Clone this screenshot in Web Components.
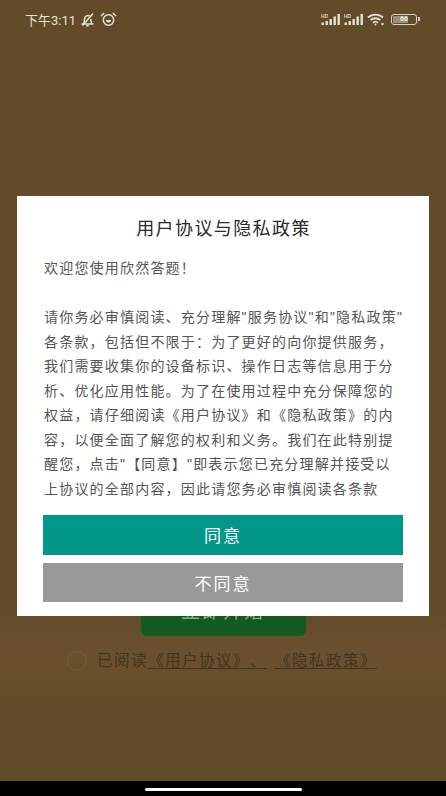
<!DOCTYPE html>
<html lang="zh">
<head>
<meta charset="utf-8">
<style>
  html, body { margin: 0; padding: 0; height: 100%; background: #000; }
  body { font-family: "Liberation Sans", "Noto Sans CJK SC", sans-serif; }
</style>
</head>
<body>
<phone-screen>
  <status-bar slot="status"></status-bar>
  <start-panel slot="content"></start-panel>
  <consent-dialog slot="overlay" heading="用户协议与隐私政策">
    <p>欢迎您使用欣然答题！</p>
    <p class="gap">请你务必审慎阅读、充分理解"服务协议"和"隐私政策"<br>各条款，包括但不限于：为了更好的向你提供服务，<br>我们需要收集你的设备标识、操作日志等信息用于分<br>析、优化应用性能。为了在使用过程中充分保障您的<br>权益，请仔细阅读《用户协议》和《隐私政策》的内<br>容，以便全面了解您的权利和义务。我们在此特别提<br>醒您，点击"【同意】"即表示您已充分理解并接受以<br>上协议的全部内容，因此请您务必审慎阅读各条款</p>
  </consent-dialog>
</phone-screen>

<script>
class PhoneScreen extends HTMLElement {
  constructor() {
    super();
    this.attachShadow({ mode: 'open' });
    this.shadowRoot.innerHTML = `
      <style>
        :host { display: flex; flex-direction: column; width: 446px; height: 796px; position: relative; overflow: hidden; background: #000; text-spacing-trim: space-all; }
        .app { flex: 1; display: flex; flex-direction: column; background: linear-gradient(#624b28 0, #624b28 610px, #6b5030 650px, #6a4f2d 672px, #624b28 700px); }
        .nav { height: 15px; background: #000; display: flex; justify-content: center; align-items: center; }
        .pill { width: 157px; height: 3px; border-radius: 2px; background: #fff; margin-top: 1px; }
        .overlay { position: absolute; left: 17px; top: 196px; }
      </style>
      <div class="app">
        <slot name="status"></slot>
        <slot name="content"></slot>
      </div>
      <div class="nav"><div class="pill"></div></div>
      <div class="overlay"><slot name="overlay"></slot></div>
    `;
  }
}

class StatusBar extends HTMLElement {
  constructor() {
    super();
    this.attachShadow({ mode: 'open' });
    const bars = `
      <svg width="20" height="13" viewBox="0 0 20 13">
        <text x="0" y="4.6" font-size="5" font-weight="700" fill="#d8d2c4" font-family="Liberation Sans">HD</text>
        <g fill="#e6e1d6">
          <rect x="0.5" y="9.5" width="2.4" height="2.5"/><rect x="4.5" y="8" width="2.4" height="4"/>
          <rect x="8.5" y="6" width="2.4" height="6"/><rect x="12.5" y="3.5" width="2.4" height="8.5"/>
          <rect x="16.5" y="1" width="2.4" height="11"/>
        </g>
      </svg>`;
    this.shadowRoot.innerHTML = `
      <style>
        :host { display: flex; align-items: center; justify-content: space-between; height: 38px; padding: 0 26px 0 25px; color: #e6e1d6; }
        .left, .right { display: flex; align-items: center; }
        .time { font: 400 13px "Roboto", "Noto Sans CJK SC", sans-serif; margin-right: 4px; }
        .left svg { margin-right: 5px; }
        .right { gap: 3px; }
        .batt { position: relative; width: 26px; height: 11px; border: 1px solid #d8d2c4; border-radius: 3px; box-sizing: border-box; margin-left: 2px; padding: 1px; }
        .batt i { display: block; height: 100%; width: 66%; background: #9a907c; border-radius: 1px; }
        .batt b { position: absolute; inset: -1px 0 0 0; text-align: center; font: 700 7px/11px "Roboto", sans-serif; color: #f0ece2; }
        .cap { width: 2px; height: 4px; background: #d8d2c4; border-radius: 0 1px 1px 0; margin-left: -2px; }
      </style>
      <div class="left">
        <span class="time">下午3:11</span>
        <svg width="15" height="15" viewBox="0 0 15 15" fill="none" stroke="#e6e1d6" stroke-width="1.5">
          <path d="M1.5 12h12M3.5 12c1-1.5 1-3 1-5a3.5 3.5 0 0 1 5.5-2.8M10.8 7c0 2 .2 3.5 1.2 5M6.2 13.8h2.6"/>
          <path d="M2.5 13.5L13 1.5"/>
        </svg>
        <svg width="17" height="16" viewBox="0 0 17 16" fill="none" stroke="#e6e1d6" stroke-width="1.5">
          <circle cx="8.5" cy="9" r="5.2"/>
          <path d="M6 9a2.5 2.5 0 0 0 5 0z" fill="#e6e1d6" stroke="none"/>
          <path d="M1 5L4.2 2M16 5L12.8 2"/>
        </svg>
      </div>
      <div class="right">
        ${bars}${bars}
        <svg width="19" height="13" viewBox="0 0 19 13" fill="none" stroke="#e6e1d6" stroke-width="1.8">
          <path d="M1 4.5a11 11 0 0 1 15 0M3.5 7.2a7.4 7.4 0 0 1 10 0M6 9.8a3.6 3.6 0 0 1 5 0"/>
          <circle cx="8.5" cy="11.6" r="1" fill="#e6e1d6" stroke="none"/>
          <circle cx="15.5" cy="11" r="1.2" fill="#e6e1d6" stroke="none"/>
        </svg>
        <div class="batt"><i></i><b>66</b></div><div class="cap"></div>
      </div>
    `;
  }
}

class StartPanel extends HTMLElement {
  constructor() {
    super();
    this.attachShadow({ mode: 'open' });
    this.shadowRoot.innerHTML = `
      <style>
        :host { display: flex; flex: 1; flex-direction: column; align-items: center; padding-top: 552px; box-sizing: border-box; }
        .start { width: 165px; height: 46px; border-radius: 6px; background: #125a22; color: #8fa98f; font-size: 19px; letter-spacing: 2px; display: flex; align-items: center; justify-content: center; padding-bottom: 8px; box-sizing: border-box; }
        .agree { align-self: flex-start; display: flex; align-items: center; height: 20px; margin: 15px 0 0 67px; color: #3e3522; font-size: 15.5px; letter-spacing: 1.5px; white-space: nowrap; }
        .radio { width: 20px; height: 20px; border: 1px solid #6f6038; border-radius: 50%; box-sizing: border-box; margin-right: 10px; }
        .label { margin-bottom: 4px; }
        u { text-underline-offset: 2px; }
        .sep { display: inline-block; width: 8px; }
      </style>
      <div class="start">立即开始</div>
      <div class="agree"><span class="radio"></span><span class="label">已阅读<u>《用户协议》、</u><span class="sep"></span><u>《隐私政策》</u></span></div>
    `;
  }
}

class ConsentDialog extends HTMLElement {
  constructor() {
    super();
    this.attachShadow({ mode: 'open' });
    this.shadowRoot.innerHTML = `
      <style>
        :host { display: flex; flex-direction: column; width: 412px; height: 420px; box-sizing: border-box; background: #fff; padding: 0 26px 14px; }
        h2 { margin: 0; height: 60px; line-height: 66px; padding-left: 1px; text-align: center; font-weight: 400; font-size: 18px; color: #2b2b2b; letter-spacing: 1.4px; }
        .body { flex: 1; padding: 0 1px; font-size: 14px; line-height: 24.5px; letter-spacing: 1.2px; color: #555; white-space: nowrap; overflow: hidden; }
        ::slotted(p) { margin: 0; }
        ::slotted(p.gap) { margin-top: 24.5px; }
        .actions { display: flex; flex-direction: column; gap: 8px; }
      </style>
      <h2></h2>
      <div class="body"><slot></slot></div>
      <div class="actions">
        <dialog-button color="#009688">同意</dialog-button>
        <dialog-button color="#999999">不同意</dialog-button>
      </div>
    `;
    this.shadowRoot.querySelector('h2').textContent = this.getAttribute('heading');
  }
}

class DialogButton extends HTMLElement {
  constructor() {
    super();
    this.attachShadow({ mode: 'open' });
    this.shadowRoot.innerHTML = `
      <style>
        :host { display: flex; align-items: center; justify-content: center; height: 39.5px; color: #fff; font-size: 17px; letter-spacing: 2px; background: var(--bg); }
      </style>
      <slot></slot>
    `;
  }
  connectedCallback() {
    this.style.setProperty('--bg', this.getAttribute('color'));
  }
}

customElements.define('dialog-button', DialogButton);
customElements.define('status-bar', StatusBar);
customElements.define('start-panel', StartPanel);
customElements.define('consent-dialog', ConsentDialog);
customElements.define('phone-screen', PhoneScreen);
</script>
</body>
</html>
